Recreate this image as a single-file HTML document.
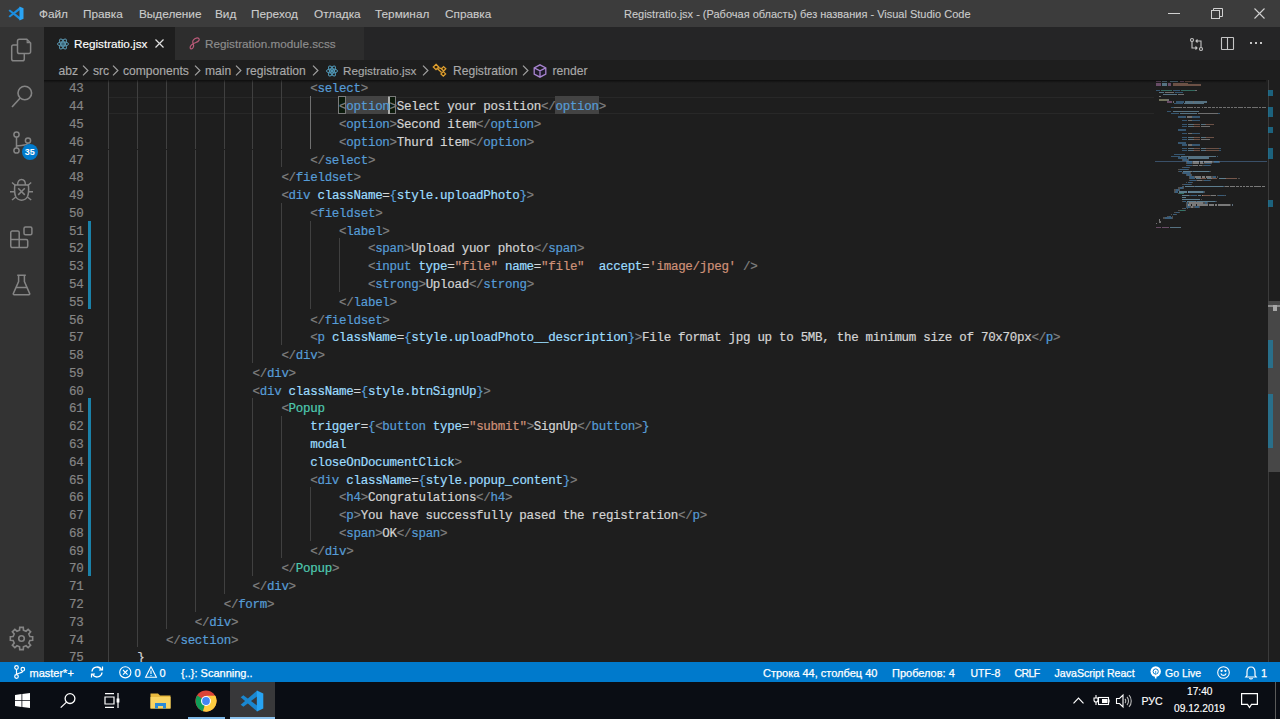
<!DOCTYPE html>
<html><head><meta charset="utf-8">
<style>
*{margin:0;padding:0;box-sizing:border-box}
html,body{width:1280px;height:719px;overflow:hidden;background:#1e1e1e}
body{position:relative;font-family:"Liberation Sans",sans-serif}
.abs{position:absolute}
svg{position:absolute;overflow:visible}
#title{position:absolute;left:0;top:0;width:1280px;height:27px;background:#3c3c3c;color:#cccccc;font-size:11.8px}
#title span{position:absolute;top:7px;white-space:nowrap;line-height:14px;-webkit-text-stroke:0.1px #cccccc}
#act{position:absolute;left:0;top:27px;width:44px;height:635px;background:#333333}
#tabs{position:absolute;left:44px;top:27px;width:1236px;height:33px;background:#252526}
.tab{position:absolute;top:0;height:33px;white-space:nowrap}
.tab span{position:absolute;top:10px;font-size:11.7px;line-height:14px;-webkit-text-stroke:0.15px currentColor}
#crumb{position:absolute;left:44px;top:60px;width:1236px;height:20px;background:#1e1e1e;color:#a9a9a9;font-size:12.1px}
#crumb span{position:absolute;top:4px;white-space:nowrap;line-height:14px;-webkit-text-stroke:0.15px #a9a9a9}
#editor{position:absolute;left:44px;top:80px;width:1236px;height:582px;background:#1e1e1e;overflow:hidden}
#shadow{position:absolute;left:44px;top:80px;width:1222px;height:3px;background:linear-gradient(#00000090,#00000000)}
.g{position:absolute;width:1px;height:17.775px;background:#404040}
.ga{background:#707070}
#lnums{position:absolute;left:44px;top:78.4px;padding-top:3px;width:39.5px;text-align:right;color:#858585;font-family:"Liberation Mono",monospace;font-size:12.5px;letter-spacing:-0.29px;line-height:17.775px;-webkit-text-stroke:0.2px #858585}
#lnums .cur{color:#858585}
#code{position:absolute;left:108.3px;top:78.4px;padding-top:3px;white-space:pre;color:#d4d4d4;font-family:"Liberation Mono",monospace;font-size:12.5px;letter-spacing:-0.29px;line-height:17.775px}
#code i{font-style:normal;-webkit-text-stroke:0.2px currentColor}
#code{-webkit-text-stroke:0.2px currentColor}
.t{color:#808080} .n{color:#569cd6} .a{color:#9cdcfe} .s{color:#ce9178} .c{color:#4ec9b0}
#curline{position:absolute;left:108px;top:97px;width:1060px;height:17px;border:1px solid #282828}
.wh{position:absolute;top:96.4px;height:17.3px;background:#434343}
.bm{position:absolute;top:96.2px;height:17.8px;border:1px solid #7a7a7a;background:#0c1a0c}
.gitbar{position:absolute;left:88px;width:3px;background:#1b81a8}
#status{position:absolute;left:0;top:662px;width:1280px;height:20px;background:#007acc;color:#ffffff;font-size:11px}
#status span{position:absolute;top:4px;white-space:nowrap;line-height:14px;-webkit-text-stroke:0.25px #fff}
#task{position:absolute;left:0;top:682px;width:1280px;height:37px;background:#0a0d14;color:#ffffff;font-size:10.2px}
#task span{position:absolute;white-space:nowrap;line-height:12px;-webkit-text-stroke:0.15px #fff}
.mm{position:absolute;height:1.4px}
</style></head><body>
<div id="title">
  <svg style="left:8px;top:5.5px" width="16" height="15" viewBox="0 0 16 15"><path d="M0.5 10.3 L11.8 1 L12.6 3.6 L1.9 11.6 Z" fill="#1c8ee0"/><path d="M0.5 4.7 L11.8 14 L12.6 11.4 L1.9 3.4 Z" fill="#1c8ee0"/><path d="M11.5 0.4 L15.5 2.2 V12.8 L11.5 14.6 Z" fill="#2aa4f4"/></svg>
  <span style="left:39px">Файл</span>
  <span style="left:83px">Правка</span>
  <span style="left:139px">Выделение</span>
  <span style="left:215px">Вид</span>
  <span style="left:251px">Переход</span>
  <span style="left:314px">Отладка</span>
  <span style="left:375px">Терминал</span>
  <span style="left:445px">Справка</span>
  <span style="left:624px;font-size:11px">Registratio.jsx - (Рабочая область) без названия - Visual Studio Code</span>
  <div class="abs" style="left:1168px;top:13px;width:12px;height:1px;background:#d0d0d0"></div>
  <svg style="left:1211px;top:8px" width="12" height="11" viewBox="0 0 12 11"><rect x="0.5" y="2.5" width="8" height="8" fill="none" stroke="#d0d0d0"/><path d="M2.5 2.5 V0.5 H11.5 V8.5 H8.5" fill="none" stroke="#d0d0d0"/></svg>
  <svg style="left:1254px;top:8px" width="11" height="11" viewBox="0 0 11 11"><path d="M0.5 0.5 L10.5 10.5 M10.5 0.5 L0.5 10.5" stroke="#d0d0d0" stroke-width="1.1"/></svg>
</div>
<div id="act">
  <!-- explorer -->
  <svg style="left:10px;top:11px" width="22" height="24" viewBox="0 0 22 24" fill="none" stroke="#858585" stroke-width="1.5"><path d="M7.5 7 H3.5 a1.8 1.8 0 0 0 -1.8 1.8 V21 a1.8 1.8 0 0 0 1.8 1.8 H12.5 a1.8 1.8 0 0 0 1.8 -1.8 V15.6"/><path d="M9.3 1.2 H16.8 L20.6 5 V13.8 a1.8 1.8 0 0 1 -1.8 1.8 H9.3 a1.8 1.8 0 0 1 -1.8 -1.8 V3 a1.8 1.8 0 0 1 1.8 -1.8 Z"/><path d="M17.2 1.8 V4.6 H20" stroke-width="1.2"/></svg>
  <!-- search -->
  <svg style="left:10.5px;top:58px" width="22" height="23" viewBox="0 0 22 23" fill="none" stroke="#858585" stroke-width="1.6"><circle cx="13.8" cy="8" r="6.8"/><path d="M9.2 13 L1 22"/></svg>
  <!-- scm -->
  <svg style="left:12.5px;top:104px" width="19" height="23" viewBox="0 0 19 23" fill="none" stroke="#858585" stroke-width="1.5"><circle cx="3.5" cy="3.5" r="2.6"/><circle cx="3.5" cy="19.5" r="2.6"/><circle cx="15" cy="9.5" r="2.6"/><path d="M3.5 6.1 V16.9 M3.5 15 C 8 14 15 15 15 12.1"/></svg>
  <div class="abs" style="left:21.5px;top:116.5px;width:16.5px;height:16.5px;border-radius:8.25px;background:#007acc;color:#fff;font-size:9px;font-weight:bold;text-align:center;line-height:16px">35</div>
  <!-- debug -->
  <svg style="left:9px;top:149px" width="25" height="26" viewBox="0 0 25 26" fill="none" stroke="#858585" stroke-width="1.5"><path d="M8.6 9 C 8.6 5.5 10.2 3.6 12.5 3.6 C 14.8 3.6 16.4 5.5 16.4 9"/><path d="M5.8 9 H19.4 C 19.8 13 20 17 18.5 20.5 C 17 23.5 15 24.2 12.6 24.2 C 10.2 24.2 8.2 23.5 6.7 20.5 C 5.2 17 5.4 13 5.8 9 Z"/><path d="M6.5 9.5 L3 6.5 M18.7 9.5 L22.2 6.5 M5.6 15.8 H1 M19.6 15.8 H24 M6.8 21 L3 24 M18.4 21 L22.2 24"/><path d="M9.2 12.3 L15.8 18.9 M15.8 12.3 L9.2 18.9"/></svg>
  <!-- extensions -->
  <svg style="left:10px;top:198px" width="24" height="24" viewBox="0 0 24 24" fill="none" stroke="#858585" stroke-width="1.5"><path d="M0.75 7.5 a1.5 1.5 0 0 1 1.5 -1.5 H7.7 a1.5 1.5 0 0 1 1.5 1.5 V14.6 H16.2 a1.5 1.5 0 0 1 1.5 1.5 V21.1 a1.5 1.5 0 0 1 -1.5 1.5 H2.25 a1.5 1.5 0 0 1 -1.5 -1.5 Z M9.2 14.6 V22.6 M0.75 14.6 H9.2"/><rect x="14" y="1.95" width="7.9" height="7.8" rx="1.5"/></svg>
  <!-- flask -->
  <svg style="left:12px;top:246px" width="19" height="23" viewBox="0 0 19 23" fill="none" stroke="#858585" stroke-width="1.5"><path d="M5.2 2.3 H13.8 M6.6 2.3 V8.5 L1.3 20.6 a0.9 0.9 0 0 0 0.8 1.2 H16.9 a0.9 0.9 0 0 0 0.8 -1.2 L12.4 8.5 V2.3 M3.8 14.5 H15.2"/></svg>
  <!-- gear -->
  <svg style="left:9px;top:598.5px" width="25" height="25" viewBox="0 0 25 25" fill="none" stroke="#858585" stroke-width="1.6"><path d="M20.88 10.57 L23.66 10.73 L23.66 14.27 L20.88 14.43 L19.79 17.06 L21.64 19.14 L19.14 21.64 L17.06 19.79 L14.43 20.88 L14.27 23.66 L10.73 23.66 L10.57 20.88 L7.94 19.79 L5.86 21.64 L3.36 19.14 L5.21 17.06 L4.12 14.43 L1.34 14.27 L1.34 10.73 L4.12 10.57 L5.21 7.94 L3.36 5.86 L5.86 3.36 L7.94 5.21 L10.57 4.12 L10.73 1.34 L14.27 1.34 L14.43 4.12 L17.06 5.21 L19.14 3.36 L21.64 5.86 L19.79 7.94 Z"/><circle cx="12.5" cy="12.5" r="2.8"/></svg>
</div>
<div id="tabs">
  <div class="tab" style="left:0;width:130.5px;background:#1e1e1e;color:#ffffff">
    <svg style="left:13px;top:11px" width="12" height="12" viewBox="0 0 12 12" fill="none" stroke="#5a98b3" stroke-width="1"><ellipse cx="6" cy="6" rx="5.6" ry="2.1"/><ellipse cx="6" cy="6" rx="5.6" ry="2.1" transform="rotate(60 6 6)"/><ellipse cx="6" cy="6" rx="5.6" ry="2.1" transform="rotate(-60 6 6)"/><circle cx="6" cy="6" r="1.3" fill="#0e2530"/></svg>
    <span style="left:30px">Registratio.jsx</span>
    <svg style="left:111px;top:12px" width="9" height="9" viewBox="0 0 9 9"><path d="M0.5 0.5 L8.5 8.5 M8.5 0.5 L0.5 8.5" stroke="#e0e0e0" stroke-width="1.2"/></svg>
  </div>
  <div class="tab" style="left:130.5px;width:189px;background:#2d2d2d;color:#8e8e8e">
    <svg style="left:13px;top:10px" width="12" height="13" viewBox="0 0 12 13" fill="none" stroke="#b85a78" stroke-width="1.2"><path d="M2.6 11.8 C 1.6 10.6 2.2 8.8 4.4 7.2 C 6.6 5.6 9.8 5.6 11 3.4 C 11.8 1.8 10.4 0.6 8.4 1.1 C 6 1.7 4.3 3.6 4.8 5.3 C 5.2 6.8 6.2 8.2 5.3 10.2 C 4.8 11.2 3.6 12.2 2.6 11.8"/></svg>
    <span style="left:30.5px">Registration.module.scss</span>
  </div>
  <svg style="left:1146px;top:11px" width="13" height="13" viewBox="0 0 13 13" fill="none" stroke="#c5c5c5" stroke-width="1.1"><circle cx="2" cy="2" r="1.5"/><circle cx="11" cy="11" r="1.5"/><path d="M2 3.5 V10 H7 M5.5 8.5 L7 10 L5.5 11.5 M11 9.5 V3 H6 M7.5 1.5 L6 3 L7.5 4.5"/></svg>
  <svg style="left:1177px;top:10px" width="13" height="13" viewBox="0 0 13 13" fill="none" stroke="#c5c5c5" stroke-width="1.1"><rect x="0.5" y="0.5" width="12" height="12" rx="0.5"/><path d="M6.5 0.5 V12.5"/></svg>
  <div class="abs" style="left:1206px;top:15px;width:2.2px;height:2.2px;background:#c5c5c5;box-shadow:5px 0 0 #c5c5c5,10px 0 0 #c5c5c5"></div>
</div>
<div id="crumb">
  <span style="left:14.5px">abz</span>
  <span style="left:49px">src</span>
  <span style="left:79px">components</span>
  <span style="left:161px">main</span>
  <span style="left:202px">registration</span>
  <svg style="left:282px;top:5px" width="12" height="12" viewBox="0 0 12 12" fill="none" stroke="#519aba" stroke-width="1"><ellipse cx="6" cy="6" rx="5.6" ry="2.1"/><ellipse cx="6" cy="6" rx="5.6" ry="2.1" transform="rotate(60 6 6)"/><ellipse cx="6" cy="6" rx="5.6" ry="2.1" transform="rotate(-60 6 6)"/><circle cx="6" cy="6" r="1.1" fill="#519aba"/></svg>
  <span style="left:299px;font-size:11.7px">Registratio.jsx</span>
  <svg style="left:389px;top:4px" width="14" height="14" viewBox="0 0 14 14" fill="#2a1e0c" stroke="#e0a030" stroke-width="1.3"><path d="M3 0.3 L5.7 3 L3 5.7 L0.3 3 Z"/><path d="M10.6 2.6 L12.8 4.8 L10.6 7 L8.4 4.8 Z"/><path d="M10.3 7.6 L12.6 9.9 L10.3 12.2 L8 9.9 Z"/><path d="M5.2 3.6 L8.6 4.6 M4.3 4.6 L8.6 8.6" fill="none"/></svg>
  <span style="left:409px">Registration</span>
  <svg style="left:489px;top:4px" width="14" height="14" viewBox="0 0 14 14" fill="#1f1a29" stroke="#a884d0" stroke-width="1.3"><path d="M7 0.8 L12.8 3.8 V10.2 L7 13.2 L1.2 10.2 V3.8 Z M1.2 3.8 L7 6.8 L12.8 3.8 M7 6.8 V13.2"/></svg>
  <span style="left:508.5px">render</span>
  <svg style="left:37.5px;top:4.8px" width="7" height="11" viewBox="0 0 7 11" fill="none" stroke="#a0a0a0" stroke-width="1.2"><path d="M1 0.6 L5.9 5.5 L1 10.4"/></svg><svg style="left:67.5px;top:4.8px" width="7" height="11" viewBox="0 0 7 11" fill="none" stroke="#a0a0a0" stroke-width="1.2"><path d="M1 0.6 L5.9 5.5 L1 10.4"/></svg><svg style="left:150.0px;top:4.8px" width="7" height="11" viewBox="0 0 7 11" fill="none" stroke="#a0a0a0" stroke-width="1.2"><path d="M1 0.6 L5.9 5.5 L1 10.4"/></svg><svg style="left:191.2px;top:4.8px" width="7" height="11" viewBox="0 0 7 11" fill="none" stroke="#a0a0a0" stroke-width="1.2"><path d="M1 0.6 L5.9 5.5 L1 10.4"/></svg><svg style="left:267.8px;top:4.8px" width="7" height="11" viewBox="0 0 7 11" fill="none" stroke="#a0a0a0" stroke-width="1.2"><path d="M1 0.6 L5.9 5.5 L1 10.4"/></svg><svg style="left:378.1px;top:4.8px" width="7" height="11" viewBox="0 0 7 11" fill="none" stroke="#a0a0a0" stroke-width="1.2"><path d="M1 0.6 L5.9 5.5 L1 10.4"/></svg><svg style="left:477.5px;top:4.8px" width="7" height="11" viewBox="0 0 7 11" fill="none" stroke="#a0a0a0" stroke-width="1.2"><path d="M1 0.6 L5.9 5.5 L1 10.4"/></svg>
</div>
<div id="editor"></div>
<div id="curline"></div>
<div class="wh" style="left:345.5px;width:43px"></div>
<div class="wh" style="left:554.5px;width:44px"></div>
<div class="bm" style="left:338px;width:8px"></div>
<div class="bm" style="left:388px;width:8px"></div>
<div class="abs" style="left:388px;top:96.5px;width:2px;height:17.3px;background:#aeafad"></div>
<div class="g" style="left:108px;top:80.00px;height:16.18px"></div><div class="g" style="left:137px;top:80.00px;height:16.18px"></div><div class="g" style="left:166px;top:80.00px;height:16.18px"></div><div class="g" style="left:195px;top:80.00px;height:16.18px"></div><div class="g" style="left:224px;top:80.00px;height:16.18px"></div><div class="g" style="left:252px;top:80.00px;height:16.18px"></div><div class="g" style="left:281px;top:80.00px;height:16.18px"></div><div class="g" style="left:108px;top:96.18px;height:17.77px"></div><div class="g" style="left:137px;top:96.18px;height:17.77px"></div><div class="g" style="left:166px;top:96.18px;height:17.77px"></div><div class="g" style="left:195px;top:96.18px;height:17.77px"></div><div class="g" style="left:224px;top:96.18px;height:17.77px"></div><div class="g" style="left:252px;top:96.18px;height:17.77px"></div><div class="g" style="left:281px;top:96.18px;height:17.77px"></div><div class="g ga" style="left:310px;top:96.18px;height:17.77px"></div><div class="g" style="left:108px;top:113.95px;height:17.77px"></div><div class="g" style="left:137px;top:113.95px;height:17.77px"></div><div class="g" style="left:166px;top:113.95px;height:17.77px"></div><div class="g" style="left:195px;top:113.95px;height:17.77px"></div><div class="g" style="left:224px;top:113.95px;height:17.77px"></div><div class="g" style="left:252px;top:113.95px;height:17.77px"></div><div class="g" style="left:281px;top:113.95px;height:17.77px"></div><div class="g ga" style="left:310px;top:113.95px;height:17.77px"></div><div class="g" style="left:108px;top:131.72px;height:17.77px"></div><div class="g" style="left:137px;top:131.72px;height:17.77px"></div><div class="g" style="left:166px;top:131.72px;height:17.77px"></div><div class="g" style="left:195px;top:131.72px;height:17.77px"></div><div class="g" style="left:224px;top:131.72px;height:17.77px"></div><div class="g" style="left:252px;top:131.72px;height:17.77px"></div><div class="g" style="left:281px;top:131.72px;height:17.77px"></div><div class="g ga" style="left:310px;top:131.72px;height:17.77px"></div><div class="g" style="left:108px;top:149.50px;height:17.77px"></div><div class="g" style="left:137px;top:149.50px;height:17.77px"></div><div class="g" style="left:166px;top:149.50px;height:17.77px"></div><div class="g" style="left:195px;top:149.50px;height:17.77px"></div><div class="g" style="left:224px;top:149.50px;height:17.77px"></div><div class="g" style="left:252px;top:149.50px;height:17.77px"></div><div class="g" style="left:281px;top:149.50px;height:17.77px"></div><div class="g" style="left:108px;top:167.28px;height:17.77px"></div><div class="g" style="left:137px;top:167.28px;height:17.77px"></div><div class="g" style="left:166px;top:167.28px;height:17.77px"></div><div class="g" style="left:195px;top:167.28px;height:17.77px"></div><div class="g" style="left:224px;top:167.28px;height:17.77px"></div><div class="g" style="left:252px;top:167.28px;height:17.77px"></div><div class="g" style="left:108px;top:185.05px;height:17.77px"></div><div class="g" style="left:137px;top:185.05px;height:17.77px"></div><div class="g" style="left:166px;top:185.05px;height:17.77px"></div><div class="g" style="left:195px;top:185.05px;height:17.77px"></div><div class="g" style="left:224px;top:185.05px;height:17.77px"></div><div class="g" style="left:252px;top:185.05px;height:17.77px"></div><div class="g" style="left:108px;top:202.82px;height:17.77px"></div><div class="g" style="left:137px;top:202.82px;height:17.77px"></div><div class="g" style="left:166px;top:202.82px;height:17.77px"></div><div class="g" style="left:195px;top:202.82px;height:17.77px"></div><div class="g" style="left:224px;top:202.82px;height:17.77px"></div><div class="g" style="left:252px;top:202.82px;height:17.77px"></div><div class="g" style="left:281px;top:202.82px;height:17.77px"></div><div class="g" style="left:108px;top:220.60px;height:17.77px"></div><div class="g" style="left:137px;top:220.60px;height:17.77px"></div><div class="g" style="left:166px;top:220.60px;height:17.77px"></div><div class="g" style="left:195px;top:220.60px;height:17.77px"></div><div class="g" style="left:224px;top:220.60px;height:17.77px"></div><div class="g" style="left:252px;top:220.60px;height:17.77px"></div><div class="g" style="left:281px;top:220.60px;height:17.77px"></div><div class="g" style="left:310px;top:220.60px;height:17.77px"></div><div class="g" style="left:108px;top:238.38px;height:17.77px"></div><div class="g" style="left:137px;top:238.38px;height:17.77px"></div><div class="g" style="left:166px;top:238.38px;height:17.77px"></div><div class="g" style="left:195px;top:238.38px;height:17.77px"></div><div class="g" style="left:224px;top:238.38px;height:17.77px"></div><div class="g" style="left:252px;top:238.38px;height:17.77px"></div><div class="g" style="left:281px;top:238.38px;height:17.77px"></div><div class="g" style="left:310px;top:238.38px;height:17.77px"></div><div class="g" style="left:339px;top:238.38px;height:17.77px"></div><div class="g" style="left:108px;top:256.15px;height:17.77px"></div><div class="g" style="left:137px;top:256.15px;height:17.77px"></div><div class="g" style="left:166px;top:256.15px;height:17.77px"></div><div class="g" style="left:195px;top:256.15px;height:17.77px"></div><div class="g" style="left:224px;top:256.15px;height:17.77px"></div><div class="g" style="left:252px;top:256.15px;height:17.77px"></div><div class="g" style="left:281px;top:256.15px;height:17.77px"></div><div class="g" style="left:310px;top:256.15px;height:17.77px"></div><div class="g" style="left:339px;top:256.15px;height:17.77px"></div><div class="g" style="left:108px;top:273.92px;height:17.77px"></div><div class="g" style="left:137px;top:273.92px;height:17.77px"></div><div class="g" style="left:166px;top:273.92px;height:17.77px"></div><div class="g" style="left:195px;top:273.92px;height:17.77px"></div><div class="g" style="left:224px;top:273.92px;height:17.77px"></div><div class="g" style="left:252px;top:273.92px;height:17.77px"></div><div class="g" style="left:281px;top:273.92px;height:17.77px"></div><div class="g" style="left:310px;top:273.92px;height:17.77px"></div><div class="g" style="left:339px;top:273.92px;height:17.77px"></div><div class="g" style="left:108px;top:291.70px;height:17.77px"></div><div class="g" style="left:137px;top:291.70px;height:17.77px"></div><div class="g" style="left:166px;top:291.70px;height:17.77px"></div><div class="g" style="left:195px;top:291.70px;height:17.77px"></div><div class="g" style="left:224px;top:291.70px;height:17.77px"></div><div class="g" style="left:252px;top:291.70px;height:17.77px"></div><div class="g" style="left:281px;top:291.70px;height:17.77px"></div><div class="g" style="left:310px;top:291.70px;height:17.77px"></div><div class="g" style="left:108px;top:309.48px;height:17.77px"></div><div class="g" style="left:137px;top:309.48px;height:17.77px"></div><div class="g" style="left:166px;top:309.48px;height:17.77px"></div><div class="g" style="left:195px;top:309.48px;height:17.77px"></div><div class="g" style="left:224px;top:309.48px;height:17.77px"></div><div class="g" style="left:252px;top:309.48px;height:17.77px"></div><div class="g" style="left:281px;top:309.48px;height:17.77px"></div><div class="g" style="left:108px;top:327.25px;height:17.77px"></div><div class="g" style="left:137px;top:327.25px;height:17.77px"></div><div class="g" style="left:166px;top:327.25px;height:17.77px"></div><div class="g" style="left:195px;top:327.25px;height:17.77px"></div><div class="g" style="left:224px;top:327.25px;height:17.77px"></div><div class="g" style="left:252px;top:327.25px;height:17.77px"></div><div class="g" style="left:281px;top:327.25px;height:17.77px"></div><div class="g" style="left:108px;top:345.02px;height:17.77px"></div><div class="g" style="left:137px;top:345.02px;height:17.77px"></div><div class="g" style="left:166px;top:345.02px;height:17.77px"></div><div class="g" style="left:195px;top:345.02px;height:17.77px"></div><div class="g" style="left:224px;top:345.02px;height:17.77px"></div><div class="g" style="left:252px;top:345.02px;height:17.77px"></div><div class="g" style="left:108px;top:362.80px;height:17.77px"></div><div class="g" style="left:137px;top:362.80px;height:17.77px"></div><div class="g" style="left:166px;top:362.80px;height:17.77px"></div><div class="g" style="left:195px;top:362.80px;height:17.77px"></div><div class="g" style="left:224px;top:362.80px;height:17.77px"></div><div class="g" style="left:108px;top:380.57px;height:17.77px"></div><div class="g" style="left:137px;top:380.57px;height:17.77px"></div><div class="g" style="left:166px;top:380.57px;height:17.77px"></div><div class="g" style="left:195px;top:380.57px;height:17.77px"></div><div class="g" style="left:224px;top:380.57px;height:17.77px"></div><div class="g" style="left:108px;top:398.35px;height:17.77px"></div><div class="g" style="left:137px;top:398.35px;height:17.77px"></div><div class="g" style="left:166px;top:398.35px;height:17.77px"></div><div class="g" style="left:195px;top:398.35px;height:17.77px"></div><div class="g" style="left:224px;top:398.35px;height:17.77px"></div><div class="g" style="left:252px;top:398.35px;height:17.77px"></div><div class="g" style="left:108px;top:416.12px;height:17.77px"></div><div class="g" style="left:137px;top:416.12px;height:17.77px"></div><div class="g" style="left:166px;top:416.12px;height:17.77px"></div><div class="g" style="left:195px;top:416.12px;height:17.77px"></div><div class="g" style="left:224px;top:416.12px;height:17.77px"></div><div class="g" style="left:252px;top:416.12px;height:17.77px"></div><div class="g" style="left:281px;top:416.12px;height:17.77px"></div><div class="g" style="left:108px;top:433.90px;height:17.77px"></div><div class="g" style="left:137px;top:433.90px;height:17.77px"></div><div class="g" style="left:166px;top:433.90px;height:17.77px"></div><div class="g" style="left:195px;top:433.90px;height:17.77px"></div><div class="g" style="left:224px;top:433.90px;height:17.77px"></div><div class="g" style="left:252px;top:433.90px;height:17.77px"></div><div class="g" style="left:281px;top:433.90px;height:17.77px"></div><div class="g" style="left:108px;top:451.67px;height:17.77px"></div><div class="g" style="left:137px;top:451.67px;height:17.77px"></div><div class="g" style="left:166px;top:451.67px;height:17.77px"></div><div class="g" style="left:195px;top:451.67px;height:17.77px"></div><div class="g" style="left:224px;top:451.67px;height:17.77px"></div><div class="g" style="left:252px;top:451.67px;height:17.77px"></div><div class="g" style="left:281px;top:451.67px;height:17.77px"></div><div class="g" style="left:108px;top:469.45px;height:17.77px"></div><div class="g" style="left:137px;top:469.45px;height:17.77px"></div><div class="g" style="left:166px;top:469.45px;height:17.77px"></div><div class="g" style="left:195px;top:469.45px;height:17.77px"></div><div class="g" style="left:224px;top:469.45px;height:17.77px"></div><div class="g" style="left:252px;top:469.45px;height:17.77px"></div><div class="g" style="left:281px;top:469.45px;height:17.77px"></div><div class="g" style="left:108px;top:487.23px;height:17.77px"></div><div class="g" style="left:137px;top:487.23px;height:17.77px"></div><div class="g" style="left:166px;top:487.23px;height:17.77px"></div><div class="g" style="left:195px;top:487.23px;height:17.77px"></div><div class="g" style="left:224px;top:487.23px;height:17.77px"></div><div class="g" style="left:252px;top:487.23px;height:17.77px"></div><div class="g" style="left:281px;top:487.23px;height:17.77px"></div><div class="g" style="left:310px;top:487.23px;height:17.77px"></div><div class="g" style="left:108px;top:505.00px;height:17.77px"></div><div class="g" style="left:137px;top:505.00px;height:17.77px"></div><div class="g" style="left:166px;top:505.00px;height:17.77px"></div><div class="g" style="left:195px;top:505.00px;height:17.77px"></div><div class="g" style="left:224px;top:505.00px;height:17.77px"></div><div class="g" style="left:252px;top:505.00px;height:17.77px"></div><div class="g" style="left:281px;top:505.00px;height:17.77px"></div><div class="g" style="left:310px;top:505.00px;height:17.77px"></div><div class="g" style="left:108px;top:522.77px;height:17.77px"></div><div class="g" style="left:137px;top:522.77px;height:17.77px"></div><div class="g" style="left:166px;top:522.77px;height:17.77px"></div><div class="g" style="left:195px;top:522.77px;height:17.77px"></div><div class="g" style="left:224px;top:522.77px;height:17.77px"></div><div class="g" style="left:252px;top:522.77px;height:17.77px"></div><div class="g" style="left:281px;top:522.77px;height:17.77px"></div><div class="g" style="left:310px;top:522.77px;height:17.77px"></div><div class="g" style="left:108px;top:540.55px;height:17.77px"></div><div class="g" style="left:137px;top:540.55px;height:17.77px"></div><div class="g" style="left:166px;top:540.55px;height:17.77px"></div><div class="g" style="left:195px;top:540.55px;height:17.77px"></div><div class="g" style="left:224px;top:540.55px;height:17.77px"></div><div class="g" style="left:252px;top:540.55px;height:17.77px"></div><div class="g" style="left:281px;top:540.55px;height:17.77px"></div><div class="g" style="left:108px;top:558.32px;height:17.77px"></div><div class="g" style="left:137px;top:558.32px;height:17.77px"></div><div class="g" style="left:166px;top:558.32px;height:17.77px"></div><div class="g" style="left:195px;top:558.32px;height:17.77px"></div><div class="g" style="left:224px;top:558.32px;height:17.77px"></div><div class="g" style="left:252px;top:558.32px;height:17.77px"></div><div class="g" style="left:108px;top:576.10px;height:17.77px"></div><div class="g" style="left:137px;top:576.10px;height:17.77px"></div><div class="g" style="left:166px;top:576.10px;height:17.77px"></div><div class="g" style="left:195px;top:576.10px;height:17.77px"></div><div class="g" style="left:224px;top:576.10px;height:17.77px"></div><div class="g" style="left:108px;top:593.87px;height:17.77px"></div><div class="g" style="left:137px;top:593.87px;height:17.77px"></div><div class="g" style="left:166px;top:593.87px;height:17.77px"></div><div class="g" style="left:195px;top:593.87px;height:17.77px"></div><div class="g" style="left:108px;top:611.65px;height:17.77px"></div><div class="g" style="left:137px;top:611.65px;height:17.77px"></div><div class="g" style="left:166px;top:611.65px;height:17.77px"></div><div class="g" style="left:108px;top:629.42px;height:17.77px"></div><div class="g" style="left:137px;top:629.42px;height:17.77px"></div><div class="g" style="left:108px;top:647.20px;height:17.77px"></div>
<div class="gitbar" style="top:220.6px;height:88.9px"></div>
<div class="gitbar" style="top:398.4px;height:177.8px"></div>
<div id="lnums"><div class="">43</div><div class="cur">44</div><div class="">45</div><div class="">46</div><div class="">47</div><div class="">48</div><div class="">49</div><div class="">50</div><div class="">51</div><div class="">52</div><div class="">53</div><div class="">54</div><div class="">55</div><div class="">56</div><div class="">57</div><div class="">58</div><div class="">59</div><div class="">60</div><div class="">61</div><div class="">62</div><div class="">63</div><div class="">64</div><div class="">65</div><div class="">66</div><div class="">67</div><div class="">68</div><div class="">69</div><div class="">70</div><div class="">71</div><div class="">72</div><div class="">73</div><div class="">74</div><div class="">75</div></div>
<div id="code"><div class="l">                            <i class="t">&lt;</i><i class="n">select</i><i class="t">&gt;</i></div><div class="l">                                <i class="t">&lt;</i><i class="n">option</i><i class="t">&gt;</i>Select your position<i class="t">&lt;/</i><i class="n">option</i><i class="t">&gt;</i></div><div class="l">                                <i class="t">&lt;</i><i class="n">option</i><i class="t">&gt;</i>Second item<i class="t">&lt;/</i><i class="n">option</i><i class="t">&gt;</i></div><div class="l">                                <i class="t">&lt;</i><i class="n">option</i><i class="t">&gt;</i>Thurd item<i class="t">&lt;/</i><i class="n">option</i><i class="t">&gt;</i></div><div class="l">                            <i class="t">&lt;/</i><i class="n">select</i><i class="t">&gt;</i></div><div class="l">                        <i class="t">&lt;/</i><i class="n">fieldset</i><i class="t">&gt;</i></div><div class="l">                        <i class="t">&lt;</i><i class="n">div</i> <i class="a">className</i>=<i class="n">{</i><i class="a">style.uploadPhoto</i><i class="n">}</i><i class="t">&gt;</i></div><div class="l">                            <i class="t">&lt;</i><i class="n">fieldset</i><i class="t">&gt;</i></div><div class="l">                                <i class="t">&lt;</i><i class="n">label</i><i class="t">&gt;</i></div><div class="l">                                    <i class="t">&lt;</i><i class="n">span</i><i class="t">&gt;</i>Upload yuor photo<i class="t">&lt;/</i><i class="n">span</i><i class="t">&gt;</i></div><div class="l">                                    <i class="t">&lt;</i><i class="n">input</i> <i class="a">type</i>=<i class="s">&quot;file&quot;</i> <i class="a">name</i>=<i class="s">&quot;file&quot;</i>  <i class="a">accept</i>=<i class="s">&#x27;image/jpeg&#x27;</i> <i class="t">/&gt;</i></div><div class="l">                                    <i class="t">&lt;</i><i class="n">strong</i><i class="t">&gt;</i>Upload<i class="t">&lt;/</i><i class="n">strong</i><i class="t">&gt;</i></div><div class="l">                                <i class="t">&lt;/</i><i class="n">label</i><i class="t">&gt;</i></div><div class="l">                            <i class="t">&lt;/</i><i class="n">fieldset</i><i class="t">&gt;</i></div><div class="l">                            <i class="t">&lt;</i><i class="n">p</i> <i class="a">className</i>=<i class="n">{</i><i class="a">style.uploadPhoto__description</i><i class="n">}</i><i class="t">&gt;</i>File format jpg up to 5MB, the minimum size of 70x70px<i class="t">&lt;/</i><i class="n">p</i><i class="t">&gt;</i></div><div class="l">                        <i class="t">&lt;/</i><i class="n">div</i><i class="t">&gt;</i></div><div class="l">                    <i class="t">&lt;/</i><i class="n">div</i><i class="t">&gt;</i></div><div class="l">                    <i class="t">&lt;</i><i class="n">div</i> <i class="a">className</i>=<i class="n">{</i><i class="a">style.btnSignUp</i><i class="n">}</i><i class="t">&gt;</i></div><div class="l">                        <i class="t">&lt;</i><i class="c">Popup</i></div><div class="l">                            <i class="a">trigger</i>=<i class="n">{</i><i class="t">&lt;</i><i class="n">button</i> <i class="a">type</i>=<i class="s">&quot;submit&quot;</i><i class="t">&gt;</i>SignUp<i class="t">&lt;/</i><i class="n">button</i><i class="t">&gt;</i><i class="n">}</i></div><div class="l">                            <i class="a">modal</i></div><div class="l">                            <i class="a">closeOnDocumentClick</i><i class="t">&gt;</i></div><div class="l">                            <i class="t">&lt;</i><i class="n">div</i> <i class="a">className</i>=<i class="n">{</i><i class="a">style.popup_content</i><i class="n">}</i><i class="t">&gt;</i></div><div class="l">                                <i class="t">&lt;</i><i class="n">h4</i><i class="t">&gt;</i>Congratulations<i class="t">&lt;/</i><i class="n">h4</i><i class="t">&gt;</i></div><div class="l">                                <i class="t">&lt;</i><i class="n">p</i><i class="t">&gt;</i>You have successfully pased the registration<i class="t">&lt;/</i><i class="n">p</i><i class="t">&gt;</i></div><div class="l">                                <i class="t">&lt;</i><i class="n">span</i><i class="t">&gt;</i>OK<i class="t">&lt;/</i><i class="n">span</i><i class="t">&gt;</i></div><div class="l">                            <i class="t">&lt;/</i><i class="n">div</i><i class="t">&gt;</i></div><div class="l">                        <i class="t">&lt;/</i><i class="c">Popup</i><i class="t">&gt;</i></div><div class="l">                    <i class="t">&lt;/</i><i class="n">div</i><i class="t">&gt;</i></div><div class="l">                <i class="t">&lt;/</i><i class="n">form</i><i class="t">&gt;</i></div><div class="l">            <i class="t">&lt;/</i><i class="n">div</i><i class="t">&gt;</i></div><div class="l">        <i class="t">&lt;/</i><i class="n">section</i><i class="t">&gt;</i></div><div class="l">    }</div></div>
<div class="abs" style="left:1153.5px;top:80px;width:114px;height:582px;background:#1e1e1e"></div>
<div class="abs" style="left:1155px;top:161px;width:112px;height:1px;background:#3a5068"></div>
<div class="mm" style="left:1181.8px;top:159.3px;width:0.9px;background:#8080807f"></div><div class="mm" style="left:1182.8px;top:159.3px;width:5.6px;background:#569cd67f"></div><div class="mm" style="left:1188.4px;top:159.3px;width:0.9px;background:#8080807f"></div><div class="mm" style="left:1185.6px;top:161.2px;width:0.9px;background:#8080807f"></div><div class="mm" style="left:1186.5px;top:161.2px;width:5.6px;background:#569cd67f"></div><div class="mm" style="left:1192.1px;top:161.2px;width:0.9px;background:#8080807f"></div><div class="mm" style="left:1193.1px;top:161.2px;width:5.6px;background:#d4d4d47f"></div><div class="mm" style="left:1199.6px;top:161.2px;width:3.7px;background:#d4d4d47f"></div><div class="mm" style="left:1204.3px;top:161.2px;width:7.5px;background:#d4d4d47f"></div><div class="mm" style="left:1211.8px;top:161.2px;width:1.9px;background:#8080807f"></div><div class="mm" style="left:1213.7px;top:161.2px;width:5.6px;background:#569cd67f"></div><div class="mm" style="left:1219.3px;top:161.2px;width:0.9px;background:#8080807f"></div><div class="mm" style="left:1185.6px;top:163.1px;width:0.9px;background:#8080807f"></div><div class="mm" style="left:1186.5px;top:163.1px;width:5.6px;background:#569cd67f"></div><div class="mm" style="left:1192.1px;top:163.1px;width:0.9px;background:#8080807f"></div><div class="mm" style="left:1193.1px;top:163.1px;width:5.6px;background:#d4d4d47f"></div><div class="mm" style="left:1199.6px;top:163.1px;width:3.7px;background:#d4d4d47f"></div><div class="mm" style="left:1203.4px;top:163.1px;width:1.9px;background:#8080807f"></div><div class="mm" style="left:1205.3px;top:163.1px;width:5.6px;background:#569cd67f"></div><div class="mm" style="left:1210.9px;top:163.1px;width:0.9px;background:#8080807f"></div><div class="mm" style="left:1185.6px;top:164.9px;width:0.9px;background:#8080807f"></div><div class="mm" style="left:1186.5px;top:164.9px;width:5.6px;background:#569cd67f"></div><div class="mm" style="left:1192.1px;top:164.9px;width:0.9px;background:#8080807f"></div><div class="mm" style="left:1193.1px;top:164.9px;width:4.7px;background:#d4d4d47f"></div><div class="mm" style="left:1198.7px;top:164.9px;width:3.7px;background:#d4d4d47f"></div><div class="mm" style="left:1202.4px;top:164.9px;width:1.9px;background:#8080807f"></div><div class="mm" style="left:1204.3px;top:164.9px;width:5.6px;background:#569cd67f"></div><div class="mm" style="left:1209.9px;top:164.9px;width:0.9px;background:#8080807f"></div><div class="mm" style="left:1181.8px;top:166.8px;width:1.9px;background:#8080807f"></div><div class="mm" style="left:1183.7px;top:166.8px;width:5.6px;background:#569cd67f"></div><div class="mm" style="left:1189.3px;top:166.8px;width:0.9px;background:#8080807f"></div><div class="mm" style="left:1178.1px;top:168.7px;width:1.9px;background:#8080807f"></div><div class="mm" style="left:1180.0px;top:168.7px;width:7.5px;background:#569cd67f"></div><div class="mm" style="left:1187.5px;top:168.7px;width:0.9px;background:#8080807f"></div><div class="mm" style="left:1178.1px;top:170.6px;width:0.9px;background:#8080807f"></div><div class="mm" style="left:1179.0px;top:170.6px;width:2.8px;background:#569cd67f"></div><div class="mm" style="left:1182.8px;top:170.6px;width:8.4px;background:#9cdcfe7f"></div><div class="mm" style="left:1191.2px;top:170.6px;width:0.9px;background:#d4d4d47f"></div><div class="mm" style="left:1192.1px;top:170.6px;width:0.9px;background:#569cd67f"></div><div class="mm" style="left:1193.1px;top:170.6px;width:15.9px;background:#9cdcfe7f"></div><div class="mm" style="left:1209.0px;top:170.6px;width:0.9px;background:#569cd67f"></div><div class="mm" style="left:1209.9px;top:170.6px;width:0.9px;background:#8080807f"></div><div class="mm" style="left:1181.8px;top:172.4px;width:0.9px;background:#8080807f"></div><div class="mm" style="left:1182.8px;top:172.4px;width:7.5px;background:#569cd67f"></div><div class="mm" style="left:1190.3px;top:172.4px;width:0.9px;background:#8080807f"></div><div class="mm" style="left:1185.6px;top:174.3px;width:0.9px;background:#8080807f"></div><div class="mm" style="left:1186.5px;top:174.3px;width:4.7px;background:#569cd67f"></div><div class="mm" style="left:1191.2px;top:174.3px;width:0.9px;background:#8080807f"></div><div class="mm" style="left:1189.3px;top:176.2px;width:0.9px;background:#8080807f"></div><div class="mm" style="left:1190.3px;top:176.2px;width:3.7px;background:#569cd67f"></div><div class="mm" style="left:1194.0px;top:176.2px;width:0.9px;background:#8080807f"></div><div class="mm" style="left:1195.0px;top:176.2px;width:5.6px;background:#d4d4d47f"></div><div class="mm" style="left:1201.5px;top:176.2px;width:3.7px;background:#d4d4d47f"></div><div class="mm" style="left:1206.2px;top:176.2px;width:4.7px;background:#d4d4d47f"></div><div class="mm" style="left:1210.9px;top:176.2px;width:1.9px;background:#8080807f"></div><div class="mm" style="left:1212.8px;top:176.2px;width:3.7px;background:#569cd67f"></div><div class="mm" style="left:1216.5px;top:176.2px;width:0.9px;background:#8080807f"></div><div class="mm" style="left:1189.3px;top:178.0px;width:0.9px;background:#8080807f"></div><div class="mm" style="left:1190.3px;top:178.0px;width:4.7px;background:#569cd67f"></div><div class="mm" style="left:1195.9px;top:178.0px;width:3.7px;background:#9cdcfe7f"></div><div class="mm" style="left:1199.6px;top:178.0px;width:0.9px;background:#d4d4d47f"></div><div class="mm" style="left:1200.6px;top:178.0px;width:5.6px;background:#ce91787f"></div><div class="mm" style="left:1207.1px;top:178.0px;width:3.7px;background:#9cdcfe7f"></div><div class="mm" style="left:1210.9px;top:178.0px;width:0.9px;background:#d4d4d47f"></div><div class="mm" style="left:1211.8px;top:178.0px;width:5.6px;background:#ce91787f"></div><div class="mm" style="left:1219.3px;top:178.0px;width:5.6px;background:#9cdcfe7f"></div><div class="mm" style="left:1224.9px;top:178.0px;width:0.9px;background:#d4d4d47f"></div><div class="mm" style="left:1225.9px;top:178.0px;width:11.2px;background:#ce91787f"></div><div class="mm" style="left:1238.1px;top:178.0px;width:1.9px;background:#8080807f"></div><div class="mm" style="left:1189.3px;top:179.9px;width:0.9px;background:#8080807f"></div><div class="mm" style="left:1190.3px;top:179.9px;width:5.6px;background:#569cd67f"></div><div class="mm" style="left:1195.9px;top:179.9px;width:0.9px;background:#8080807f"></div><div class="mm" style="left:1196.8px;top:179.9px;width:5.6px;background:#d4d4d47f"></div><div class="mm" style="left:1202.4px;top:179.9px;width:1.9px;background:#8080807f"></div><div class="mm" style="left:1204.3px;top:179.9px;width:5.6px;background:#569cd67f"></div><div class="mm" style="left:1209.9px;top:179.9px;width:0.9px;background:#8080807f"></div><div class="mm" style="left:1185.6px;top:181.8px;width:1.9px;background:#8080807f"></div><div class="mm" style="left:1187.5px;top:181.8px;width:4.7px;background:#569cd67f"></div><div class="mm" style="left:1192.1px;top:181.8px;width:0.9px;background:#8080807f"></div><div class="mm" style="left:1181.8px;top:183.7px;width:1.9px;background:#8080807f"></div><div class="mm" style="left:1183.7px;top:183.7px;width:7.5px;background:#569cd67f"></div><div class="mm" style="left:1191.2px;top:183.7px;width:0.9px;background:#8080807f"></div><div class="mm" style="left:1181.8px;top:185.5px;width:0.9px;background:#8080807f"></div><div class="mm" style="left:1182.8px;top:185.5px;width:0.9px;background:#569cd67f"></div><div class="mm" style="left:1184.6px;top:185.5px;width:8.4px;background:#9cdcfe7f"></div><div class="mm" style="left:1193.1px;top:185.5px;width:0.9px;background:#d4d4d47f"></div><div class="mm" style="left:1194.0px;top:185.5px;width:0.9px;background:#569cd67f"></div><div class="mm" style="left:1195.0px;top:185.5px;width:28.1px;background:#9cdcfe7f"></div><div class="mm" style="left:1223.1px;top:185.5px;width:0.9px;background:#569cd67f"></div><div class="mm" style="left:1224.0px;top:185.5px;width:0.9px;background:#8080807f"></div><div class="mm" style="left:1224.9px;top:185.5px;width:3.7px;background:#d4d4d47f"></div><div class="mm" style="left:1229.6px;top:185.5px;width:5.6px;background:#d4d4d47f"></div><div class="mm" style="left:1236.2px;top:185.5px;width:2.8px;background:#d4d4d47f"></div><div class="mm" style="left:1239.9px;top:185.5px;width:1.9px;background:#d4d4d47f"></div><div class="mm" style="left:1242.7px;top:185.5px;width:1.9px;background:#d4d4d47f"></div><div class="mm" style="left:1245.6px;top:185.5px;width:3.7px;background:#d4d4d47f"></div><div class="mm" style="left:1250.2px;top:185.5px;width:2.8px;background:#d4d4d47f"></div><div class="mm" style="left:1254.0px;top:185.5px;width:6.6px;background:#d4d4d47f"></div><div class="mm" style="left:1261.5px;top:185.5px;width:3.7px;background:#d4d4d47f"></div><div class="mm" style="left:1178.1px;top:187.4px;width:1.9px;background:#8080807f"></div><div class="mm" style="left:1180.0px;top:187.4px;width:2.8px;background:#569cd67f"></div><div class="mm" style="left:1182.8px;top:187.4px;width:0.9px;background:#8080807f"></div><div class="mm" style="left:1174.3px;top:189.3px;width:1.9px;background:#8080807f"></div><div class="mm" style="left:1176.2px;top:189.3px;width:2.8px;background:#569cd67f"></div><div class="mm" style="left:1179.0px;top:189.3px;width:0.9px;background:#8080807f"></div><div class="mm" style="left:1174.3px;top:191.2px;width:0.9px;background:#8080807f"></div><div class="mm" style="left:1175.3px;top:191.2px;width:2.8px;background:#569cd67f"></div><div class="mm" style="left:1179.0px;top:191.2px;width:8.4px;background:#9cdcfe7f"></div><div class="mm" style="left:1187.5px;top:191.2px;width:0.9px;background:#d4d4d47f"></div><div class="mm" style="left:1188.4px;top:191.2px;width:0.9px;background:#569cd67f"></div><div class="mm" style="left:1189.3px;top:191.2px;width:14.1px;background:#9cdcfe7f"></div><div class="mm" style="left:1203.4px;top:191.2px;width:0.9px;background:#569cd67f"></div><div class="mm" style="left:1204.3px;top:191.2px;width:0.9px;background:#8080807f"></div><div class="mm" style="left:1178.1px;top:193.0px;width:0.9px;background:#8080807f"></div><div class="mm" style="left:1179.0px;top:193.0px;width:4.7px;background:#4ec9b07f"></div><div class="mm" style="left:1181.8px;top:194.9px;width:6.6px;background:#9cdcfe7f"></div><div class="mm" style="left:1188.4px;top:194.9px;width:0.9px;background:#d4d4d47f"></div><div class="mm" style="left:1189.3px;top:194.9px;width:0.9px;background:#569cd67f"></div><div class="mm" style="left:1190.3px;top:194.9px;width:0.9px;background:#8080807f"></div><div class="mm" style="left:1191.2px;top:194.9px;width:5.6px;background:#569cd67f"></div><div class="mm" style="left:1197.8px;top:194.9px;width:3.7px;background:#9cdcfe7f"></div><div class="mm" style="left:1201.5px;top:194.9px;width:0.9px;background:#d4d4d47f"></div><div class="mm" style="left:1202.4px;top:194.9px;width:7.5px;background:#ce91787f"></div><div class="mm" style="left:1209.9px;top:194.9px;width:0.9px;background:#8080807f"></div><div class="mm" style="left:1210.9px;top:194.9px;width:5.6px;background:#d4d4d47f"></div><div class="mm" style="left:1216.5px;top:194.9px;width:1.9px;background:#8080807f"></div><div class="mm" style="left:1218.4px;top:194.9px;width:5.6px;background:#569cd67f"></div><div class="mm" style="left:1224.0px;top:194.9px;width:0.9px;background:#8080807f"></div><div class="mm" style="left:1224.9px;top:194.9px;width:0.9px;background:#569cd67f"></div><div class="mm" style="left:1181.8px;top:196.8px;width:4.7px;background:#9cdcfe7f"></div><div class="mm" style="left:1181.8px;top:198.7px;width:18.7px;background:#9cdcfe7f"></div><div class="mm" style="left:1200.6px;top:198.7px;width:0.9px;background:#8080807f"></div><div class="mm" style="left:1181.8px;top:200.5px;width:0.9px;background:#8080807f"></div><div class="mm" style="left:1182.8px;top:200.5px;width:2.8px;background:#569cd67f"></div><div class="mm" style="left:1186.5px;top:200.5px;width:8.4px;background:#9cdcfe7f"></div><div class="mm" style="left:1195.0px;top:200.5px;width:0.9px;background:#d4d4d47f"></div><div class="mm" style="left:1195.9px;top:200.5px;width:0.9px;background:#569cd67f"></div><div class="mm" style="left:1196.8px;top:200.5px;width:17.8px;background:#9cdcfe7f"></div><div class="mm" style="left:1214.6px;top:200.5px;width:0.9px;background:#569cd67f"></div><div class="mm" style="left:1215.6px;top:200.5px;width:0.9px;background:#8080807f"></div><div class="mm" style="left:1185.6px;top:202.4px;width:0.9px;background:#8080807f"></div><div class="mm" style="left:1186.5px;top:202.4px;width:1.9px;background:#569cd67f"></div><div class="mm" style="left:1188.4px;top:202.4px;width:0.9px;background:#8080807f"></div><div class="mm" style="left:1189.3px;top:202.4px;width:14.1px;background:#d4d4d47f"></div><div class="mm" style="left:1203.4px;top:202.4px;width:1.9px;background:#8080807f"></div><div class="mm" style="left:1205.3px;top:202.4px;width:1.9px;background:#569cd67f"></div><div class="mm" style="left:1207.1px;top:202.4px;width:0.9px;background:#8080807f"></div><div class="mm" style="left:1185.6px;top:204.3px;width:0.9px;background:#8080807f"></div><div class="mm" style="left:1186.5px;top:204.3px;width:0.9px;background:#569cd67f"></div><div class="mm" style="left:1187.5px;top:204.3px;width:0.9px;background:#8080807f"></div><div class="mm" style="left:1188.4px;top:204.3px;width:2.8px;background:#d4d4d47f"></div><div class="mm" style="left:1192.1px;top:204.3px;width:3.7px;background:#d4d4d47f"></div><div class="mm" style="left:1196.8px;top:204.3px;width:11.2px;background:#d4d4d47f"></div><div class="mm" style="left:1209.0px;top:204.3px;width:4.7px;background:#d4d4d47f"></div><div class="mm" style="left:1214.6px;top:204.3px;width:2.8px;background:#d4d4d47f"></div><div class="mm" style="left:1218.4px;top:204.3px;width:11.2px;background:#d4d4d47f"></div><div class="mm" style="left:1229.6px;top:204.3px;width:1.9px;background:#8080807f"></div><div class="mm" style="left:1231.5px;top:204.3px;width:0.9px;background:#569cd67f"></div><div class="mm" style="left:1232.4px;top:204.3px;width:0.9px;background:#8080807f"></div><div class="mm" style="left:1185.6px;top:206.2px;width:0.9px;background:#8080807f"></div><div class="mm" style="left:1186.5px;top:206.2px;width:3.7px;background:#569cd67f"></div><div class="mm" style="left:1190.3px;top:206.2px;width:0.9px;background:#8080807f"></div><div class="mm" style="left:1191.2px;top:206.2px;width:1.9px;background:#d4d4d47f"></div><div class="mm" style="left:1193.1px;top:206.2px;width:1.9px;background:#8080807f"></div><div class="mm" style="left:1195.0px;top:206.2px;width:3.7px;background:#569cd67f"></div><div class="mm" style="left:1198.7px;top:206.2px;width:0.9px;background:#8080807f"></div><div class="mm" style="left:1181.8px;top:208.0px;width:1.9px;background:#8080807f"></div><div class="mm" style="left:1183.7px;top:208.0px;width:2.8px;background:#569cd67f"></div><div class="mm" style="left:1186.5px;top:208.0px;width:0.9px;background:#8080807f"></div><div class="mm" style="left:1178.1px;top:209.9px;width:1.9px;background:#8080807f"></div><div class="mm" style="left:1180.0px;top:209.9px;width:4.7px;background:#4ec9b07f"></div><div class="mm" style="left:1184.6px;top:209.9px;width:0.9px;background:#8080807f"></div><div class="mm" style="left:1174.3px;top:211.8px;width:1.9px;background:#8080807f"></div><div class="mm" style="left:1176.2px;top:211.8px;width:2.8px;background:#569cd67f"></div><div class="mm" style="left:1179.0px;top:211.8px;width:0.9px;background:#8080807f"></div><div class="mm" style="left:1170.6px;top:213.7px;width:1.9px;background:#8080807f"></div><div class="mm" style="left:1172.5px;top:213.7px;width:3.7px;background:#569cd67f"></div><div class="mm" style="left:1176.2px;top:213.7px;width:0.9px;background:#8080807f"></div><div class="mm" style="left:1166.8px;top:215.5px;width:1.9px;background:#8080807f"></div><div class="mm" style="left:1168.7px;top:215.5px;width:2.8px;background:#569cd67f"></div><div class="mm" style="left:1171.5px;top:215.5px;width:0.9px;background:#8080807f"></div><div class="mm" style="left:1163.1px;top:217.4px;width:1.9px;background:#8080807f"></div><div class="mm" style="left:1165.0px;top:217.4px;width:6.6px;background:#569cd67f"></div><div class="mm" style="left:1171.5px;top:217.4px;width:0.9px;background:#8080807f"></div><div class="mm" style="left:1159.3px;top:219.3px;width:0.9px;background:#d4d4d47f"></div><div class="mm" style="left:1155.6px;top:80.6px;width:5.6px;background:#c586c072"></div><div class="mm" style="left:1162.2px;top:80.6px;width:4.7px;background:#9cdcfe72"></div><div class="mm" style="left:1169.7px;top:80.6px;width:8.4px;background:#9cdcfe72"></div><div class="mm" style="left:1180.0px;top:80.6px;width:3.7px;background:#c586c072"></div><div class="mm" style="left:1184.6px;top:80.6px;width:7.5px;background:#ce917872"></div><div class="mm" style="left:1155.6px;top:82.5px;width:5.6px;background:#c586c072"></div><div class="mm" style="left:1162.2px;top:82.5px;width:4.7px;background:#9cdcfe72"></div><div class="mm" style="left:1167.8px;top:82.5px;width:3.7px;background:#c586c072"></div><div class="mm" style="left:1172.5px;top:82.5px;width:15.0px;background:#ce917872"></div><div class="mm" style="left:1155.6px;top:84.3px;width:5.6px;background:#c586c072"></div><div class="mm" style="left:1162.2px;top:84.3px;width:4.7px;background:#9cdcfe72"></div><div class="mm" style="left:1167.8px;top:84.3px;width:3.7px;background:#c586c072"></div><div class="mm" style="left:1172.5px;top:84.3px;width:28.1px;background:#ce917872"></div><div class="mm" style="left:1155.6px;top:90.0px;width:4.7px;background:#569cd672"></div><div class="mm" style="left:1161.2px;top:90.0px;width:11.2px;background:#4ec9b072"></div><div class="mm" style="left:1173.4px;top:90.0px;width:6.6px;background:#569cd672"></div><div class="mm" style="left:1180.9px;top:90.0px;width:14.1px;background:#4ec9b072"></div><div class="mm" style="left:1195.0px;top:90.0px;width:1.9px;background:#d4d4d472"></div><div class="mm" style="left:1159.3px;top:91.8px;width:4.7px;background:#9cdcfe72"></div><div class="mm" style="left:1165.0px;top:91.8px;width:9.4px;background:#d4d4d472"></div><div class="mm" style="left:1175.3px;top:91.8px;width:7.5px;background:#569cd672"></div><div class="mm" style="left:1163.1px;top:93.7px;width:14.1px;background:#9cdcfe72"></div><div class="mm" style="left:1178.1px;top:93.7px;width:5.6px;background:#d4d4d472"></div><div class="mm" style="left:1159.3px;top:95.6px;width:1.9px;background:#d4d4d472"></div><div class="mm" style="left:1159.3px;top:99.3px;width:7.5px;background:#dcdcaa72"></div><div class="mm" style="left:1166.8px;top:99.3px;width:1.9px;background:#d4d4d472"></div><div class="mm" style="left:1166.8px;top:101.2px;width:5.6px;background:#c586c072"></div><div class="mm" style="left:1172.5px;top:101.2px;width:1.9px;background:#d4d4d472"></div><div class="mm" style="left:1176.2px;top:101.2px;width:7.5px;background:#569cd672"></div><div class="mm" style="left:1184.6px;top:101.2px;width:8.4px;background:#9cdcfe72"></div><div class="mm" style="left:1193.1px;top:101.2px;width:0.9px;background:#d4d4d472"></div><div class="mm" style="left:1194.0px;top:101.2px;width:13.1px;background:#9cdcfe72"></div><div class="mm" style="left:1174.3px;top:103.1px;width:8.4px;background:#569cd672"></div><div class="mm" style="left:1183.7px;top:103.1px;width:20.6px;background:#9cdcfe72"></div><div class="mm" style="left:1170.6px;top:106.8px;width:3.7px;background:#569cd672"></div><div class="mm" style="left:1174.3px;top:106.8px;width:7.5px;background:#d4d4d472"></div><div class="mm" style="left:1182.8px;top:106.8px;width:2.8px;background:#d4d4d472"></div><div class="mm" style="left:1186.5px;top:106.8px;width:6.6px;background:#d4d4d472"></div><div class="mm" style="left:1194.0px;top:106.8px;width:1.9px;background:#d4d4d472"></div><div class="mm" style="left:1196.8px;top:106.8px;width:3.7px;background:#d4d4d472"></div><div class="mm" style="left:1201.5px;top:106.8px;width:1.9px;background:#d4d4d472"></div><div class="mm" style="left:1204.3px;top:106.8px;width:2.8px;background:#d4d4d472"></div><div class="mm" style="left:1208.1px;top:106.8px;width:2.8px;background:#d4d4d472"></div><div class="mm" style="left:1211.8px;top:106.8px;width:2.8px;background:#d4d4d472"></div><div class="mm" style="left:1215.6px;top:106.8px;width:2.8px;background:#d4d4d472"></div><div class="mm" style="left:1219.3px;top:106.8px;width:2.8px;background:#d4d4d472"></div><div class="mm" style="left:1223.1px;top:106.8px;width:2.8px;background:#d4d4d472"></div><div class="mm" style="left:1226.8px;top:106.8px;width:2.8px;background:#d4d4d472"></div><div class="mm" style="left:1230.6px;top:106.8px;width:2.8px;background:#d4d4d472"></div><div class="mm" style="left:1234.3px;top:106.8px;width:2.8px;background:#d4d4d472"></div><div class="mm" style="left:1238.1px;top:106.8px;width:4.7px;background:#d4d4d472"></div><div class="mm" style="left:1243.7px;top:106.8px;width:2.8px;background:#d4d4d472"></div><div class="mm" style="left:1247.4px;top:106.8px;width:3.7px;background:#d4d4d472"></div><div class="mm" style="left:1252.1px;top:106.8px;width:5.6px;background:#d4d4d472"></div><div class="mm" style="left:1258.7px;top:106.8px;width:2.8px;background:#d4d4d472"></div><div class="mm" style="left:1262.4px;top:106.8px;width:3.6px;background:#d4d4d472"></div><div class="mm" style="left:1166.8px;top:110.6px;width:4.7px;background:#569cd672"></div><div class="mm" style="left:1172.5px;top:110.6px;width:9.4px;background:#9cdcfe72"></div><div class="mm" style="left:1181.8px;top:110.6px;width:0.9px;background:#d4d4d472"></div><div class="mm" style="left:1182.8px;top:110.6px;width:15.9px;background:#9cdcfe72"></div><div class="mm" style="left:1170.6px;top:112.5px;width:8.4px;background:#569cd672"></div><div class="mm" style="left:1180.0px;top:112.5px;width:16.9px;background:#9cdcfe72"></div><div class="mm" style="left:1197.8px;top:112.5px;width:20.6px;background:#d4d4d472"></div><div class="mm" style="left:1218.4px;top:112.5px;width:1.9px;background:#569cd672"></div><div class="mm" style="left:1178.1px;top:116.2px;width:7.5px;background:#569cd672"></div><div class="mm" style="left:1186.5px;top:116.2px;width:5.6px;background:#d4d4d472"></div><div class="mm" style="left:1192.1px;top:116.2px;width:7.5px;background:#569cd672"></div><div class="mm" style="left:1181.8px;top:120.0px;width:5.6px;background:#569cd672"></div><div class="mm" style="left:1187.5px;top:120.0px;width:4.7px;background:#d4d4d472"></div><div class="mm" style="left:1192.1px;top:120.0px;width:7.5px;background:#569cd672"></div><div class="mm" style="left:1181.8px;top:123.7px;width:5.6px;background:#569cd672"></div><div class="mm" style="left:1188.4px;top:123.7px;width:4.7px;background:#9cdcfe72"></div><div class="mm" style="left:1193.1px;top:123.7px;width:0.9px;background:#d4d4d472"></div><div class="mm" style="left:1194.0px;top:123.7px;width:5.6px;background:#ce917872"></div><div class="mm" style="left:1200.6px;top:123.7px;width:4.7px;background:#9cdcfe72"></div><div class="mm" style="left:1205.3px;top:123.7px;width:0.9px;background:#d4d4d472"></div><div class="mm" style="left:1206.2px;top:123.7px;width:7.5px;background:#ce917872"></div><div class="mm" style="left:1181.8px;top:125.6px;width:5.6px;background:#569cd672"></div><div class="mm" style="left:1188.4px;top:125.6px;width:4.7px;background:#9cdcfe72"></div><div class="mm" style="left:1193.1px;top:125.6px;width:0.9px;background:#d4d4d472"></div><div class="mm" style="left:1194.0px;top:125.6px;width:5.6px;background:#ce917872"></div><div class="mm" style="left:1200.6px;top:125.6px;width:9.4px;background:#d4d4d472"></div><div class="mm" style="left:1178.1px;top:129.3px;width:7.5px;background:#569cd672"></div><div class="mm" style="left:1181.8px;top:133.1px;width:5.6px;background:#569cd672"></div><div class="mm" style="left:1187.5px;top:133.1px;width:4.7px;background:#d4d4d472"></div><div class="mm" style="left:1192.1px;top:133.1px;width:7.5px;background:#569cd672"></div><div class="mm" style="left:1181.8px;top:136.8px;width:5.6px;background:#569cd672"></div><div class="mm" style="left:1188.4px;top:136.8px;width:4.7px;background:#9cdcfe72"></div><div class="mm" style="left:1193.1px;top:136.8px;width:0.9px;background:#d4d4d472"></div><div class="mm" style="left:1194.0px;top:136.8px;width:5.6px;background:#ce917872"></div><div class="mm" style="left:1200.6px;top:136.8px;width:4.7px;background:#9cdcfe72"></div><div class="mm" style="left:1205.3px;top:136.8px;width:0.9px;background:#d4d4d472"></div><div class="mm" style="left:1206.2px;top:136.8px;width:7.5px;background:#ce917872"></div><div class="mm" style="left:1181.8px;top:138.7px;width:5.6px;background:#569cd672"></div><div class="mm" style="left:1188.4px;top:138.7px;width:4.7px;background:#9cdcfe72"></div><div class="mm" style="left:1193.1px;top:138.7px;width:0.9px;background:#d4d4d472"></div><div class="mm" style="left:1194.0px;top:138.7px;width:5.6px;background:#ce917872"></div><div class="mm" style="left:1200.6px;top:138.7px;width:9.4px;background:#d4d4d472"></div><div class="mm" style="left:1178.1px;top:142.4px;width:7.5px;background:#569cd672"></div><div class="mm" style="left:1181.8px;top:144.3px;width:5.6px;background:#569cd672"></div><div class="mm" style="left:1187.5px;top:144.3px;width:4.7px;background:#d4d4d472"></div><div class="mm" style="left:1192.1px;top:144.3px;width:7.5px;background:#569cd672"></div><div class="mm" style="left:1181.8px;top:148.1px;width:5.6px;background:#569cd672"></div><div class="mm" style="left:1188.4px;top:148.1px;width:4.7px;background:#9cdcfe72"></div><div class="mm" style="left:1193.1px;top:148.1px;width:0.9px;background:#d4d4d472"></div><div class="mm" style="left:1194.0px;top:148.1px;width:5.6px;background:#ce917872"></div><div class="mm" style="left:1200.6px;top:148.1px;width:4.7px;background:#9cdcfe72"></div><div class="mm" style="left:1205.3px;top:148.1px;width:0.9px;background:#d4d4d472"></div><div class="mm" style="left:1206.2px;top:148.1px;width:13.1px;background:#ce917872"></div><div class="mm" style="left:1219.3px;top:148.1px;width:1.9px;background:#569cd672"></div><div class="mm" style="left:1181.8px;top:149.9px;width:5.6px;background:#569cd672"></div><div class="mm" style="left:1188.4px;top:149.9px;width:4.7px;background:#9cdcfe72"></div><div class="mm" style="left:1193.1px;top:149.9px;width:0.9px;background:#d4d4d472"></div><div class="mm" style="left:1194.0px;top:149.9px;width:5.6px;background:#ce917872"></div><div class="mm" style="left:1200.6px;top:149.9px;width:4.7px;background:#9cdcfe72"></div><div class="mm" style="left:1205.3px;top:149.9px;width:0.9px;background:#d4d4d472"></div><div class="mm" style="left:1206.2px;top:149.9px;width:13.1px;background:#ce917872"></div><div class="mm" style="left:1219.3px;top:149.9px;width:1.9px;background:#569cd672"></div><div class="mm" style="left:1174.3px;top:153.7px;width:10.3px;background:#569cd672"></div><div class="mm" style="left:1170.6px;top:155.6px;width:9.4px;background:#569cd672"></div><div class="mm" style="left:1180.9px;top:155.6px;width:8.4px;background:#9cdcfe72"></div><div class="mm" style="left:1189.3px;top:155.6px;width:0.9px;background:#d4d4d472"></div><div class="mm" style="left:1190.3px;top:155.6px;width:26.2px;background:#9cdcfe72"></div><div class="mm" style="left:1216.5px;top:155.6px;width:1.9px;background:#569cd672"></div><div class="mm" style="left:1178.1px;top:157.4px;width:9.4px;background:#569cd672"></div><div class="mm" style="left:1188.4px;top:157.4px;width:20.6px;background:#9cdcfe72"></div><div class="mm" style="left:1159.3px;top:221.2px;width:1.9px;background:#d4d4d472"></div><div class="mm" style="left:1155.6px;top:223.0px;width:0.9px;background:#d4d4d472"></div><div class="mm" style="left:1155.6px;top:226.8px;width:5.6px;background:#c586c072"></div><div class="mm" style="left:1162.2px;top:226.8px;width:6.6px;background:#c586c072"></div><div class="mm" style="left:1169.7px;top:226.8px;width:11.2px;background:#9cdcfe72"></div>
<div class="abs" style="left:1268px;top:80px;width:1px;height:582px;background:#3b3b3b"></div>
<div class="abs" style="left:1268px;top:301px;width:12px;height:171px;background:#474747"></div>
<div class="abs" style="left:1268px;top:89.5px;width:4.6px;height:6.0px;background:#1b81a8b0"></div><div class="abs" style="left:1268px;top:106.5px;width:4.6px;height:10.0px;background:#1b81a8b0"></div><div class="abs" style="left:1268px;top:126.5px;width:4.6px;height:6.5px;background:#1b81a8b0"></div><div class="abs" style="left:1268px;top:147.5px;width:4.6px;height:11.5px;background:#1b81a8b0"></div><div class="abs" style="left:1268px;top:200px;width:4.6px;height:6.5px;background:#1b81a8b0"></div><div class="abs" style="left:1268px;top:340px;width:4.6px;height:28px;background:#1b81a8b0"></div><div class="abs" style="left:1268px;top:393.5px;width:4.6px;height:54.0px;background:#1b81a8b0"></div><div class="abs" style="left:1268px;top:305px;width:12px;height:2px;background:#8a8a8a"></div><div class="abs" style="left:1272.5px;top:305px;width:4.5px;height:6px;background:#a8a8a8"></div>
<div id="shadow"></div>
<div id="status">
  <svg style="left:14px;top:3px" width="11" height="14" viewBox="0 0 11 14" fill="none" stroke="#fff" stroke-width="1.2"><circle cx="2.5" cy="2.5" r="1.8"/><circle cx="2.5" cy="11.5" r="1.8"/><circle cx="8.8" cy="4.2" r="1.8"/><path d="M2.5 4.3 V9.7 M2.5 9 C 5 8 8.8 8 8.8 6"/></svg>
  <span style="left:29.5px">master*+</span>
  <svg style="left:90px;top:4px" width="14" height="12" viewBox="0 0 14 12" fill="none" stroke="#fff" stroke-width="1.4"><path d="M2 5.5 A5 5 0 0 1 11.5 4 M12 6.5 A5 5 0 0 1 2.5 8"/><path d="M9 4 H12.5 V0.5 M5 8 H1.5 V11.5" stroke-width="1.2"/></svg>
  <svg style="left:119px;top:4px" width="13" height="13" viewBox="0 0 13 13" fill="none" stroke="#fff" stroke-width="1.1"><circle cx="6.3" cy="6.3" r="5.6"/><path d="M4 4 L8.6 8.6 M8.6 4 L4 8.6"/></svg>
  <span style="left:134.5px">0</span>
  <svg style="left:144.5px;top:4px" width="12" height="12" viewBox="0 0 12 12" fill="none" stroke="#fff" stroke-width="1.1"><path d="M6 0.8 L11.4 11.2 H0.6 Z M6 4.5 V8 M6 9 V10"/></svg>
  <span style="left:159.5px">0</span>
  <span style="left:181px">{..}: Scanning..</span>
  <span style="left:763px">Строка 44, столбец 40</span>
  <span style="left:892px">Пробелов: 4</span>
  <span style="left:970.5px;font-size:10.5px">UTF-8</span>
  <span style="left:1014.5px;font-size:10.5px;letter-spacing:-0.6px">CRLF</span>
  <span style="left:1054.5px;font-size:10.6px">JavaScript React</span>
  <svg style="left:1149.5px;top:4px" width="12" height="13" viewBox="0 0 12 13"><circle cx="5.7" cy="5.5" r="5.2" fill="#fff"/><circle cx="5.7" cy="5.5" r="2.6" fill="none" stroke="#007acc" stroke-width="1"/><path d="M5.7 5 V12.5" stroke="#fff" stroke-width="1.6"/><path d="M5.7 5 V9" stroke="#007acc" stroke-width="0.8"/></svg>
  <span style="left:1165px;font-size:10.5px">Go Live</span>
  <svg style="left:1216.5px;top:3.5px" width="13" height="13" viewBox="0 0 13 13" fill="none" stroke="#fff" stroke-width="1.1"><circle cx="6.5" cy="6.5" r="5.8"/><path d="M3.8 7.5 C 5 10 8 10 9.2 7.5"/><circle cx="4.6" cy="4.8" r="0.6" fill="#fff"/><circle cx="8.4" cy="4.8" r="0.6" fill="#fff"/></svg>
  <svg style="left:1245px;top:3.5px" width="12" height="14" viewBox="0 0 12 14" fill="none" stroke="#fff" stroke-width="1.2"><path d="M6 1 C 3 1 2 3.5 2 6 V9.5 L0.8 11 H11.2 L10 9.5 V6 C 10 3.5 9 1 6 1 Z M4.5 12 C 5 13.3 7 13.3 7.5 12"/></svg>
  <span style="left:1261px">1</span>
</div>
<div id="task">
  <svg style="left:15px;top:11px" width="15" height="15" viewBox="0 0 15 15" fill="#fff"><path d="M0 2 L6.5 1.1 V7 H0 Z M7.3 1 L15 0 V7 H7.3 Z M0 7.8 H6.5 V13.9 L0 13 Z M7.3 7.8 H15 V15 L7.3 14 Z"/></svg>
  <svg style="left:60px;top:11px" width="16" height="15" viewBox="0 0 16 15" fill="none" stroke="#fff" stroke-width="1.3"><circle cx="10" cy="5.6" r="4.9"/><path d="M6.5 9.1 L0.7 14.6"/></svg>
  <svg style="left:104px;top:11px" width="16" height="15" viewBox="0 0 16 15" fill="none" stroke="#fff" stroke-width="1.2"><path d="M1 0.6 H10 M1 14.4 H10 M1 4 H10 V11 H1 Z M14 0 V15" /><rect x="12.6" y="5.5" width="2.8" height="4" fill="#fff" stroke="none"/></svg>
  <svg style="left:150px;top:10px" width="21" height="17" viewBox="0 0 21 17"><path d="M0.5 1.5 H8 L10 3.5 H20.5 V16.5 H0.5 Z" fill="#e8b93e"/><path d="M0.5 5 H20.5 V16.5 H0.5 Z" fill="#f9d463"/><path d="M5 11 H16 V16.5 H13 V14 H8 V16.5 H5 Z" fill="#2b8ad6"/></svg>
  <svg style="left:195px;top:7.5px" width="22" height="22" viewBox="0 0 22 22"><circle cx="11" cy="11" r="10.6" fill="#db4437"/><path d="M11 11 L2.2 5.6 A10.6 10.6 0 0 0 8 21.2 Z" fill="#0f9d58"/><path d="M11 11 L8 21.2 A10.6 10.6 0 0 0 21.6 11 L19.8 5.6 Z" fill="#ffcd40"/><path d="M11 5.8 H20.3 A10.6 10.6 0 0 1 21.6 11 Z" fill="#ffcd40"/><circle cx="11" cy="11" r="5" fill="#fff"/><circle cx="11" cy="11" r="3.9" fill="#4285f4"/></svg>
  <div class="abs" style="left:187.5px;top:35px;width:37px;height:2px;background:#7db7e6"></div>
  <div class="abs" style="left:230px;top:0;width:45px;height:35px;background:#38383a"></div>
  <div class="abs" style="left:230px;top:35px;width:45px;height:2px;background:#8cc3ef"></div>
  <svg style="left:240px;top:8px" width="24" height="22" viewBox="0 0 16 15"><path d="M0.3 10.1 L11.6 0.3 L12.8 3.4 L2.1 11.5 Z" fill="#1a87d0"/><path d="M0.3 4.9 L11.6 14.7 L12.8 11.6 L2.1 3.5 Z" fill="#1a87d0"/><path d="M11.3 0.3 L15.7 2.4 V12.6 L11.3 14.7 Z" fill="#27a3f2"/></svg>
  <svg style="left:1073px;top:15px" width="11" height="7" viewBox="0 0 11 7" fill="none" stroke="#fff" stroke-width="1.2"><path d="M0.5 6.3 L5.5 1 L10.5 6.3"/></svg>
  <svg style="left:1093px;top:13px" width="17" height="11" viewBox="0 0 17 11" fill="none" stroke="#fff" stroke-width="1.1"><path d="M3 0 V3 M1 3 H5 V5 C5 6 4 7 3 7 C2 7 1 6 1 5 Z M3 7 V10"/><rect x="5.5" y="2.5" width="10" height="7"/><rect x="9" y="4" width="5.5" height="4" fill="#fff" stroke="none"/><path d="M16 4.5 V7.5"/></svg>
  <svg style="left:1116px;top:11.5px" width="15" height="14" viewBox="0 0 15 14" fill="none" stroke="#fff" stroke-width="1.1"><path d="M0.5 4.5 H3.5 L7 1 V13 L3.5 9.5 H0.5 Z"/><path d="M9 5 C 10 6 10 8 9 9 M11 3 C 13 5 13 9 11 11 M13 1.2 C 16 4 16 10 13 12.8" stroke="#bbb"/></svg>
  <span style="left:1141.5px;top:12.5px;font-size:10.6px">РУС</span>
  <span style="left:1187px;top:4px">17:40</span>
  <span style="left:1174px;top:21px">09.12.2019</span>
  <svg style="left:1241px;top:10.5px" width="17" height="16" viewBox="0 0 17 16" fill="none" stroke="#fff" stroke-width="1.2"><path d="M0.6 0.6 H16.4 V11.4 H10.5 L8.5 14.5 L6.5 11.4 H0.6 Z"/></svg>
  <div class="abs" style="left:1275px;top:0;width:1px;height:37px;background:#5a5a5a"></div>
</div>
</body></html>
